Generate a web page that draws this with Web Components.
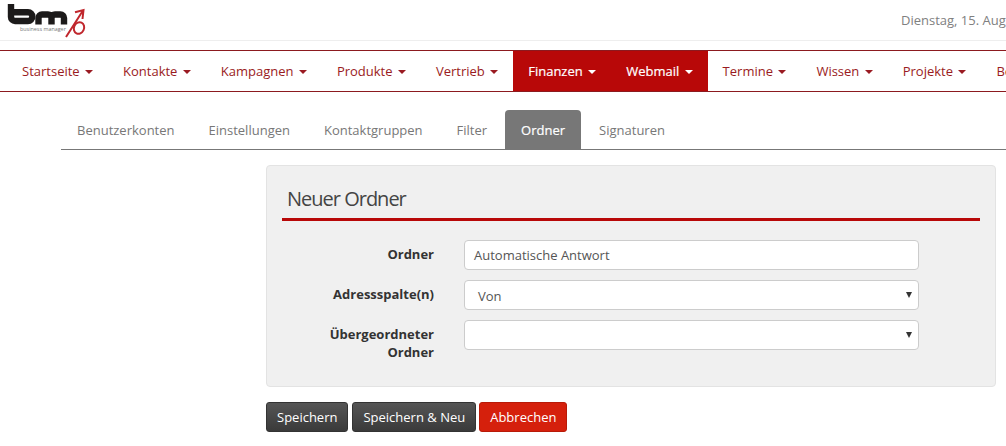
<!DOCTYPE html>
<html lang="de">

<head>
    <meta charset="UTF-8">
    <title>Neuer Ordner</title>
    <style>
        html, body { margin: 0; padding: 0; background: #fff; overflow: hidden; }
        body { font: 13px/20px "Open Sans", sans-serif; color: #333; width: 1006px; height: 446px; }
    </style>
</head>

<body>
    <bm-header date="Dienstag, 15. August 2017"></bm-header>

    <bm-nav>
        <bm-nav-item>Startseite</bm-nav-item>
        <bm-nav-item>Kontakte</bm-nav-item>
        <bm-nav-item>Kampagnen</bm-nav-item>
        <bm-nav-item>Produkte</bm-nav-item>
        <bm-nav-item>Vertrieb</bm-nav-item>
        <bm-nav-item active>Finanzen</bm-nav-item>
        <bm-nav-item active>Webmail</bm-nav-item>
        <bm-nav-item>Termine</bm-nav-item>
        <bm-nav-item>Wissen</bm-nav-item>
        <bm-nav-item>Projekte</bm-nav-item>
        <bm-nav-item>Berichte</bm-nav-item>
    </bm-nav>

    <bm-tabs>
        <bm-tab>Benutzerkonten</bm-tab>
        <bm-tab>Einstellungen</bm-tab>
        <bm-tab>Kontaktgruppen</bm-tab>
        <bm-tab>Filter</bm-tab>
        <bm-tab active>Ordner</bm-tab>
        <bm-tab>Signaturen</bm-tab>
    </bm-tabs>

    <bm-panel heading="Neuer Ordner">
        <bm-row label="Ordner"><bm-input value="Automatische Antwort"></bm-input></bm-row>
        <bm-row label="Adressspalte(n)"><bm-select value="Von"></bm-select></bm-row>
        <bm-row label="Übergeordneter Ordner"><bm-select></bm-select></bm-row>
    </bm-panel>

    <bm-actions>
        <bm-button>Speichern</bm-button>
        <bm-button>Speichern &amp; Neu</bm-button>
        <bm-button danger>Abbrechen</bm-button>
    </bm-actions>

    <script>
        // Small helper so every element below has the same shadow setup
        class BmElement extends HTMLElement {
            constructor() {
                super();
                this.attachShadow({ mode: 'open' }).innerHTML = this.render();
            }
        }

        // Header: ............................................................... //

        class BmHeader extends BmElement {
            render() {
                return `
                    <style>
                        :host { display: flex; height: 40px; border-bottom: 1px solid #eee; overflow: hidden; align-items: flex-start; }
                        svg { flex: none; width: 90px; height: 40px; }
                        .date { flex: none; margin: 10px 0 0 811px; color: #808080; white-space: nowrap; }
                        .tag { font: 5.400px "Open Sans", sans-serif; fill: #777; }
                    </style>
                    <svg viewBox="0 0 90 40">
                        <g fill="none" stroke="#1c1a1a" stroke-width="6.4">
                            <path d="M11 4v13a4 4 0 0 0 4 4h13a4.400 4.400 0 0 0 0-8.800h-16"/>
                            <path d="M38.500 24.500V18a3.500 3.500 0 0 1 3.500-3.500h6a3.500 3.500 0 0 1 3.500 3.500v6.500M51.500 18a3.500 3.500 0 0 1 3.500-3.500h5.500a3.500 3.500 0 0 1 3.500 3.500v6.500"/>
                        </g>
                        <text class="tag" x="20" y="31">business manager</text>
                        <g fill="none" stroke="#c0272d" stroke-width="2">
                            <path d="M66 37 83 10.500M75 12.300 83.500 10 82.500 19"/>
                            <ellipse cx="79" cy="28" rx="5" ry="6" transform="rotate(25 79 28)"/>
                        </g>
                    </svg>
                    <span class="date">${this.getAttribute('date')}</span>
                `;
            }
        }
        customElements.define('bm-header', BmHeader);

        // Main navigation: ............................................................... //

        class BmNav extends BmElement {
            render() {
                return `
                    <style>
                        :host { display: flex; margin-top: 9px; padding-left: 7px; height: 40px; border-top: 1px solid #8c1a1f; border-bottom: 1px solid #8c1a1f; overflow: hidden; }
                    </style>
                    <slot></slot>
                `;
            }
        }
        customElements.define('bm-nav', BmNav);

        class BmNavItem extends BmElement {
            render() {
                return `
                    <style>
                        :host { display: flex; flex: none; align-items: center; gap: 5.400px; padding: 0 15px; margin: -1px 0; color: #9a1b22; white-space: nowrap; }
                        :host([active]) { background: #b80808; color: #fff; -webkit-text-stroke: 0.2px #fff; }
                        i { width: 0; height: 0; margin-top: 2px; border-top: 4px solid currentColor; border-left: 4px solid transparent; border-right: 4px solid transparent; }
                    </style>
                    <slot></slot><i></i>
                `;
            }
        }
        customElements.define('bm-nav-item', BmNavItem);

        // Tabs: ............................................................... //

        class BmTabs extends BmElement {
            render() {
                return `
                    <style>
                        :host { display: flex; margin: 18px 0 0 61px; height: 39px; border-bottom: 1px solid #777; }
                    </style>
                    <slot></slot>
                `;
            }
        }
        customElements.define('bm-tabs', BmTabs);

        class BmTab extends BmElement {
            render() {
                return `
                    <style>
                        :host { display: flex; align-items: center; padding: 0 16px; margin-right: 2px; color: #777; border-radius: 4px 4px 0 0; }
                        :host([active]) { background: #777; color: #fff; -webkit-text-stroke: 0.2px #fff; }
                    </style>
                    <slot></slot>
                `;
            }
        }
        customElements.define('bm-tab', BmTab);

        // Form panel: ............................................................... //

        class BmPanel extends BmElement {
            render() {
                return `
                    <style>
                        :host { display: block; box-sizing: border-box; width: 730px; height: 222px; margin: 15px 0 0 266px; padding: 0 15px; background: #f0f0f0; border: 1px solid #e3e3e3; border-radius: 4px; }
                        h2 { margin: 0 0 19px; padding: 19px 0 5px 5px; font-size: 20px; line-height: 28px; font-weight: 400; letter-spacing: -1px; color: #444; border-bottom: 3px solid #b80808; }
                    </style>
                    <h2>${this.getAttribute('heading')}</h2>
                    <slot></slot>
                `;
            }
        }
        customElements.define('bm-panel', BmPanel);

        class BmRow extends BmElement {
            render() {
                return `
                    <style>
                        :host { display: flex; gap: 30px; margin-bottom: 10px; }
                        label { flex: none; box-sizing: border-box; width: 152px; padding: 5px 0 0 30px; text-align: right; font-weight: 700; color: #333; line-height: 18px; }
                    </style>
                    <label>${this.getAttribute('label')}</label>
                    <slot></slot>
                `;
            }
        }
        customElements.define('bm-row', BmRow);

        class BmInput extends BmElement {
            render() {
                return `
                    <style>
                        :host { display: block; box-sizing: border-box; width: 455px; height: 30px; padding: 4px 9px; background: #fff; border: 1px solid #ccc; border-radius: 4px; color: #555; }
                    </style>
                    ${this.getAttribute('value')}
                `;
            }
        }
        customElements.define('bm-input', BmInput);

        class BmSelect extends BmElement {
            render() {
                return `
                    <style>
                        :host { display: flex; align-items: center; justify-content: space-between; box-sizing: border-box; width: 455px; height: 30px; padding: 0 6px 0 13px; background: #fff; border: 1px solid #ccc; border-radius: 4px; color: #555; }
                        span { margin-top: 2px; }
                        i { width: 0; height: 0; border-top: 6px solid #333; border-left: 3.500px solid transparent; border-right: 3.500px solid transparent; }
                    </style>
                    <span>${this.getAttribute('value') || ''}</span><i></i>
                `;
            }
        }
        customElements.define('bm-select', BmSelect);

        // Buttons: ............................................................... //

        class BmActions extends BmElement {
            render() {
                return `
                    <style>
                        :host { display: flex; gap: 4px; margin: 15px 0 0 266px; }
                    </style>
                    <slot></slot>
                `;
            }
        }
        customElements.define('bm-actions', BmActions);

        class BmButton extends BmElement {
            render() {
                return `
                    <style>
                        :host { display: block; box-sizing: border-box; height: 30px; padding: 4px 10px; color: #fff; background: linear-gradient(#555, #3a3a3a); border: 1px solid #333; border-radius: 3px; white-space: nowrap; }
                        :host([danger]) { margin-left: -1px; background: #d5200c; border-color: #b81a08; }
                    </style>
                    <slot></slot>
                `;
            }
        }
        customElements.define('bm-button', BmButton);
    </script>
</body>

</html>
